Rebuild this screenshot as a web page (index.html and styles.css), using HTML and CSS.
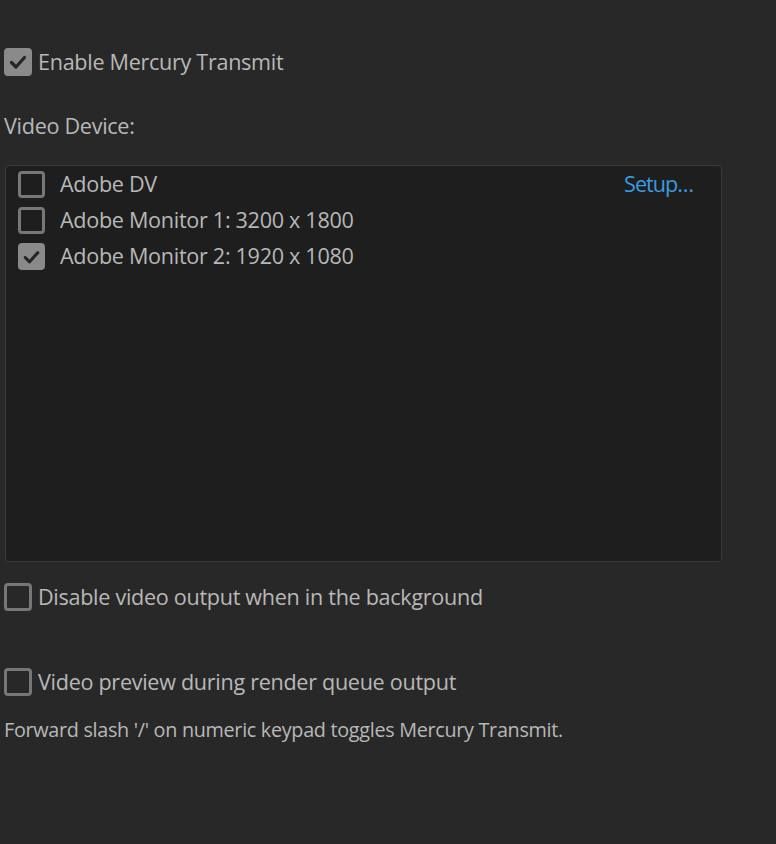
FILE: index.html
```html
<!DOCTYPE html>
<html>
<head>
<meta charset="utf-8">
<link rel="stylesheet" href="styles.css">
</head>
<body>
<div class="page">
  <label class="row top-row">
    <span class="cb checked"><svg viewBox="0 0 28 28"><path d="M7.5 14.5 L12 19 L20.5 9.5" /></svg></span>
    <span class="txt">Enable Mercury Transmit</span>
  </label>
  <div class="section-label">Video Device:</div>
  <div class="panel">
    <div class="item">
      <span class="cb"></span>
      <span class="txt">Adobe DV</span>
      <span class="setup">Setup…</span>
    </div>
    <div class="item">
      <span class="cb"></span>
      <span class="txt">Adobe Monitor 1: 3200 x 1800</span>
    </div>
    <div class="item">
      <span class="cb checked"><svg viewBox="0 0 28 28"><path d="M7.5 14.5 L12 19 L20.5 9.5" /></svg></span>
      <span class="txt">Adobe Monitor 2: 1920 x 1080</span>
    </div>
  </div>
  <label class="row disable-row">
    <span class="cb"></span>
    <span class="txt">Disable video output when in the background</span>
  </label>
  <label class="row preview-row">
    <span class="cb"></span>
    <span class="txt">Video preview during render queue output</span>
  </label>
  <div class="note">Forward slash '/' on numeric keypad toggles Mercury Transmit.</div>
</div>
</body>
</html>
```

FILE: styles.css
```css
html, body {
  margin: 0;
  padding: 0;
  background: #282828;
  height: 100%;
}
body {
  font-family: "Open Sans", "Noto Sans", sans-serif;
  color: #b8b8b8;
  font-size: 21.6px;
}
.page {
  display: flex;
  flex-direction: column;
  padding: 48px 0 0 4px;
}
.row {
  display: flex;
  align-items: center;
  height: 28px;
  gap: 6px;
}
.cb {
  box-sizing: border-box;
  width: 28px;
  height: 28px;
  border: 3px solid #777;
  border-radius: 4px;
  flex: none;
  display: flex;
}
.cb.checked {
  background: #8a8a8a;
  border-color: #8a8a8a;
}
.cb svg {
  width: 28px;
  height: 28px;
  margin: -3px;
}
.cb svg path {
  fill: none;
  stroke: #262626;
  stroke-width: 3.2;
  stroke-linecap: round;
  stroke-linejoin: round;
}
.txt {
  white-space: nowrap;
  letter-spacing: -0.3px;
  margin-top: -2px;
}
.section-label {
  margin-top: 37px;
  height: 28px;
  line-height: 26px;
  letter-spacing: -0.3px;
}
.panel {
  margin-top: 24px;
  margin-left: 1px;
  width: 717px;
  height: 397px;
  box-sizing: border-box;
  background: #1e1e1e;
  border: 1px solid #3a3a3a;
  border-radius: 4px;
  padding: 0 28px 0 12px;
  display: flex;
  flex-direction: column;
}
.item {
  display: flex;
  align-items: center;
  height: 36px;
  gap: 15px;
}
.item .cb {
  width: 27px;
  height: 27px;
}
.setup {
  margin-left: auto;
  margin-top: -2px;
  color: #3a9be0;
  letter-spacing: -1px;
}
.disable-row {
  margin-top: 21px;
}
.preview-row {
  margin-top: 57px;
}
.note {
  margin-top: 21px;
  height: 28px;
  line-height: 26px;
  font-size: 19.8px;
  letter-spacing: -0.3px;
}
```
